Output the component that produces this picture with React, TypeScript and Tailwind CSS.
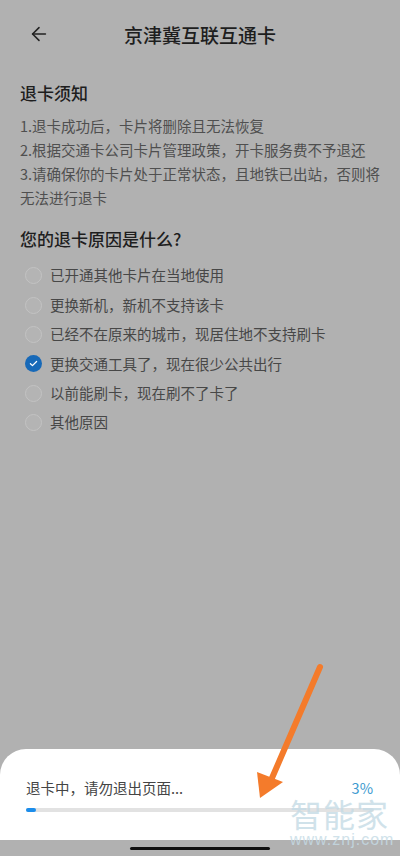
import { ArrowLeft } from "lucide-react";

const notices = [
	"1.退卡成功后，卡片将删除且无法恢复",
	"2.根据交通卡公司卡片管理政策，开卡服务费不予退还",
	"3.请确保你的卡片处于正常状态，且地铁已出站，否则将",
	"无法进行退卡",
];

const reasons = [
	"已开通其他卡片在当地使用",
	"更换新机，新机不支持该卡",
	"已经不在原来的城市，现居住地不支持刷卡",
	"更换交通工具了，现在很少公共出行",
	"以前能刷卡，现在刷不了卡了",
	"其他原因",
];

const CHECKED = 3;

function Radio({ checked }: { checked: boolean }) {
	if (checked) {
		return (
			<span className="flex size-[17px] items-center justify-center rounded-full bg-[#1769b8]">
				<svg viewBox="0 0 16 16" className="size-[11px]" fill="none">
					<path
						d="M3.5 8.3l3 2.8 6-6"
						stroke="white"
						strokeWidth="1.8"
						strokeLinecap="round"
						strokeLinejoin="round"
					/>
				</svg>
			</span>
		);
	}
	return (
		<span className="size-[17px] rounded-full border border-[#c3c3c3] bg-[#b4b4b4]" />
	);
}

export default function App() {
	return (
		<div
			className="relative flex h-[856px] w-[400px] flex-col overflow-hidden bg-[#b1b1b1]"
			style={{ fontFamily: '"Noto Sans CJK SC", "Noto Sans", sans-serif' }}
		>
			{/* header */}
			<div className="relative mt-[20px] flex h-[28px] items-center justify-center">
				<ArrowLeft
					className="absolute left-[28px] size-[22px] text-[#222]"
					strokeWidth={1.7}
				/>
				<h1 className="text-[19px] font-medium leading-none text-[#1e1e1e]">
					京津冀互联互通卡
				</h1>
			</div>

			{/* notice */}
			<div className="mt-[33px] px-[20px]">
				<h2 className="text-[17px] font-medium leading-[24px] text-[#1e1e1e]">
					退卡须知
				</h2>
				<div className="mt-[9px] flex flex-col">
					{notices.map((n) => (
						<p
							key={n}
							className="whitespace-nowrap text-[14.5px] leading-[24px] text-[#4f4f4f]"
						>
							{n}
						</p>
					))}
				</div>

				<h2 className="mt-[17px] text-[17px] font-medium leading-[24px] text-[#1e1e1e]">
					您的退卡原因是什么?
				</h2>
				<div className="mt-[10px] flex flex-col">
					{reasons.map((r, i) => (
						<div key={r} className="flex h-[29.4px] items-center gap-[8px] pl-[5px]">
							<Radio checked={i === CHECKED} />
							<span className="text-[14.5px] leading-none text-[#474747]">{r}</span>
						</div>
					))}
				</div>
			</div>

			{/* progress sheet */}
			<div className="mt-auto flex h-[91px] flex-col rounded-t-[26px] bg-white px-[26px] pt-[29px]">
				<div className="flex items-center justify-between">
					<span className="text-[14.5px] leading-[20px] text-[#444]">
						退卡中，请勿退出页面...
					</span>
					<span className="mr-[1px] text-[14.5px] leading-[20px] text-[#3b9ad0]">
						3%
					</span>
				</div>
				<div className="mt-[10px] h-[4px] w-full rounded-full bg-[#e2e2e2]">
					<div className="h-full w-[10px] rounded-full bg-[#1c8deb]" />
				</div>
			</div>
			<div className="flex h-[16px] items-center justify-center bg-[#b1b1b1]">
				<div className="h-[3px] w-[140px] rounded-full bg-[#111]" />
			</div>

			{/* watermark */}
			<div className="pointer-events-none absolute left-[290px] top-[795px] flex flex-col items-start whitespace-nowrap text-[#c5dbe6] opacity-80">
				<span className="text-[32px] leading-[36px] tracking-[1px]">智能家</span>
				<span
					className="text-[16px] leading-[18px] tracking-[1px]"
					style={{ fontFamily: '"Liberation Sans", sans-serif' }}
				>
					www.znj.com
				</span>
			</div>

			{/* annotation arrow */}
			<svg
				className="pointer-events-none absolute left-0 top-0"
				width="400"
				height="856"
				viewBox="0 0 400 856"
			>
				<line
					x1="320"
					y1="667"
					x2="272"
					y2="778"
					stroke="#f47b2b"
					strokeWidth="6"
					strokeLinecap="round"
				/>
				<polygon points="257,772 283,782 260,798" fill="#f47b2b" />
			</svg>
		</div>
	);
}
